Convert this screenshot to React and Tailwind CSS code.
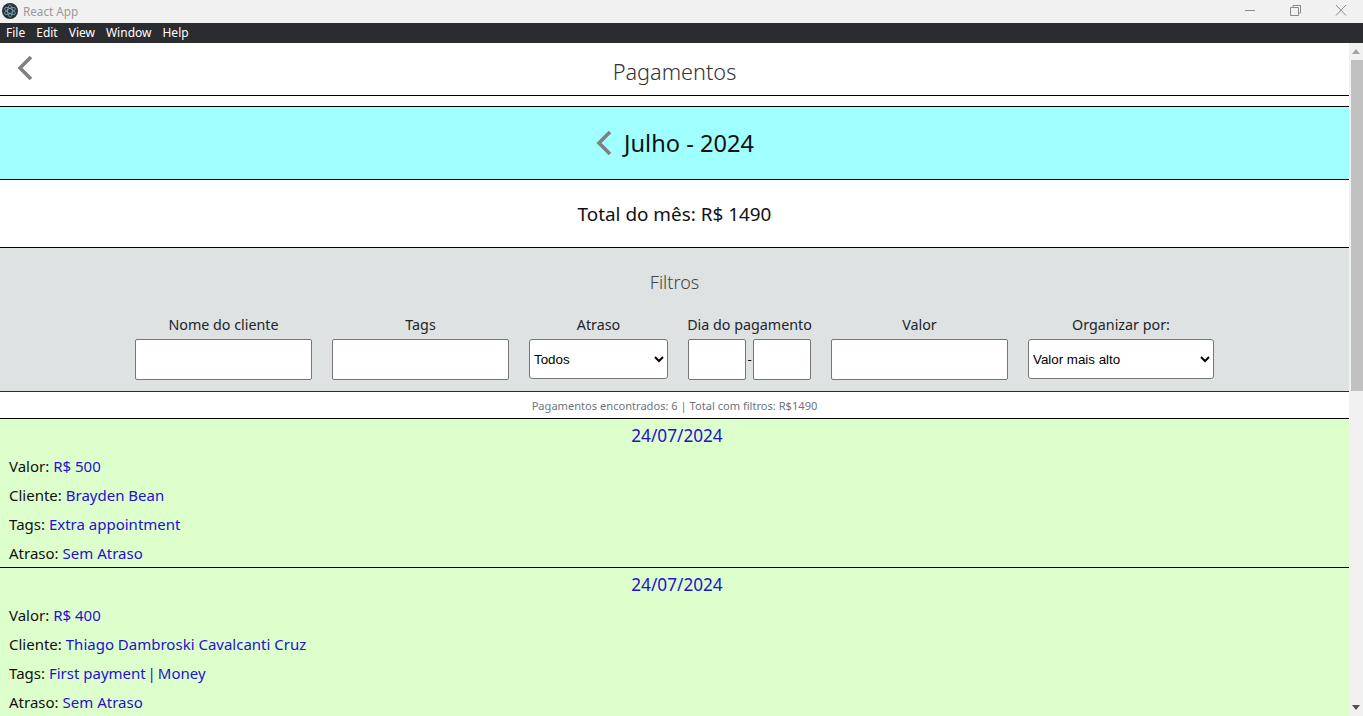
const ui = "font-['Noto_Sans',sans-serif]";

function Chevron({ className }) {
  return (
    <svg viewBox="0 0 18 26" className={className} fill="none" stroke="#808080" strokeWidth="3.6">
      <path d="M15 2 L4 13 L15 24" />
    </svg>
  );
}

function Logo() {
  return (
    <svg viewBox="0 0 16 16" className="w-4 h-4 ml-[2px] shrink-0">
      <circle cx="8" cy="8" r="8" fill="#2b2f3b" />
      <g fill="none" stroke="#9feaf9" strokeWidth="0.7" opacity="0.75">
        <ellipse cx="8" cy="8" rx="6" ry="2.4" transform="rotate(30 8 8)" />
        <ellipse cx="8" cy="8" rx="6" ry="2.4" transform="rotate(90 8 8)" />
        <ellipse cx="8" cy="8" rx="6" ry="2.4" transform="rotate(150 8 8)" />
      </g>
    </svg>
  );
}

function TitleBar() {
  return (
    <div className="h-[23px] shrink-0 bg-[#f1f1f1] flex items-center justify-between">
      <div className="flex items-center gap-[5px]">
        <Logo />
        <span className="text-[11.7px] text-[#999999]">React App</span>
      </div>
      <div className="flex items-center">
        <svg viewBox="0 0 160 23" className="w-[160px] h-[23px]" fill="none" stroke="#8a8a8a" strokeWidth="1">
          <path d="M42 10.5 H52" />
          <path d="M87.5 7.5 H95.5 V15.5 H87.5 Z" />
          <path d="M90 7 V5.5 H97.5 V13 H96" />
          <path d="M133 5 L143 15.5 M143 5 L133 15.5" />
        </svg>
      </div>
    </div>
  );
}

function MenuBar() {
  return (
    <div className="h-[20px] shrink-0 bg-[#2b2c30] flex items-center pl-[6px] gap-[11px] text-[12px] text-white">
      <span>File</span>
      <span>Edit</span>
      <span>View</span>
      <span>Window</span>
      <span>Help</span>
    </div>
  );
}

function Scrollbar() {
  return (
    <div className="w-[14px] shrink-0 bg-[#f1f1f1] flex flex-col items-end">
      <div className="h-[17px] w-full flex items-center justify-center">
        <svg viewBox="0 0 8 5" className="w-2 h-[5px]"><path d="M4 0 L8 5 H0 Z" fill="#a3a3a3" /></svg>
      </div>
      <div className="h-[331px] w-[12px] bg-[#c1c1c1]" />
      <div className="flex-1" />
      <div className="h-[17px] w-full flex items-center justify-center">
        <svg viewBox="0 0 8 5" className="w-2 h-[5px]"><path d="M0 0 H8 L4 5 Z" fill="#505050" /></svg>
      </div>
    </div>
  );
}

function Field({ label, width, children }) {
  return (
    <div className="flex flex-col items-center" style={{ width }}>
      <label className="h-[26px] text-[14.3px] leading-[24px] text-[#212529] whitespace-nowrap">{label}</label>
      {children}
    </div>
  );
}

const inputCls = "h-[41px] bg-white border border-[#767676] rounded-[2px]";
const selectCls = "h-[40px] w-full bg-white border border-[#767676] rounded-[3px] text-[13.33px] text-black pl-0 font-['Liberation_Sans',sans-serif]";

function Filters() {
  return (
    <div className="h-[144px] shrink-0 bg-[#dee2e3] border-b border-[#0b3b36]">
      <div className="text-center text-[18px] font-light leading-[27px] text-[#444444] pt-[21px]">Filtros</div>
      <div className="flex justify-center gap-[20px] mt-[17px]">
        <Field label="Nome do cliente" width={177}><input className={inputCls + " w-full"} /></Field>
        <Field label="Tags" width={177}><input className={inputCls + " w-full"} /></Field>
        <Field label="Atraso" width={139}>
          <select className={selectCls} defaultValue="Todos"><option>Todos</option></select>
        </Field>
        <Field label="Dia do pagamento" width={123}>
          <div className="flex items-center w-full">
            <input className={inputCls + " w-[58px]"} />
            <span className="w-[7px] text-center text-[13px] leading-none">-</span>
            <input className={inputCls + " w-[58px]"} />
          </div>
        </Field>
        <Field label="Valor" width={177}><input className={inputCls + " w-full"} /></Field>
        <Field label="Organizar por:" width={186}>
          <select className={selectCls} defaultValue="Valor mais alto"><option>Valor mais alto</option></select>
        </Field>
      </div>
    </div>
  );
}

function Row({ k, v }) {
  const parts = v.split(" | ");
  return (
    <div className="h-[29px] last:h-[28px] leading-[29px] text-[15px] text-[#111111] whitespace-nowrap">
      {k}:{" "}
      <span className="text-[#2410d0]">
        {parts.length > 1 ? (
          <>
            {parts[0]}
            <span className="mx-[-2px]"> | </span>
            {parts[1]}
          </>
        ) : (
          v
        )}
      </span>
    </div>
  );
}

function Card({ date, rows, last }) {
  return (
    <div className={"bg-[#ddffcc] shrink-0 " + (last ? "" : "border-b border-black")}>
      <div className="h-[33px] pl-[5px] text-center text-[17.2px] leading-[34px] text-[#2410d0]">{date}</div>
      <div className="pl-[9px]">
        {rows.map(([k, v]) => <Row key={k} k={k} v={v} />)}
      </div>
    </div>
  );
}

export default function App() {
  return (
    <div className={"h-screen w-full flex flex-col overflow-hidden bg-white " + ui}>
      <TitleBar />
      <MenuBar />
      <div className="flex-1 min-h-0 flex">
        <main className="flex-1 min-w-0 flex flex-col overflow-hidden">
          <header className="h-[53px] shrink-0 pt-[6px] border-b border-black flex items-center justify-center relative">
            <Chevron className="absolute left-[16px] top-[12px] w-[18px] h-[26px]" />
            <h1 className="text-[21.7px] font-light text-[#333333]">Pagamentos</h1>
          </header>
          <div className="h-[10px] shrink-0" />
          <section className="h-[74px] shrink-0 bg-[#a0ffff] border-y border-black flex items-center justify-center gap-[11px]">
            <Chevron className="w-[18px] h-[26px]" />
            <span className="text-[23.6px] pt-[2px] text-[#111111]">Julho - 2024</span>
          </section>
          <section className="h-[68px] shrink-0 pt-[2px] border-b border-black flex items-center justify-center text-[18.9px] text-[#111111]">
            Total do mês: R$ 1490
          </section>
          <Filters />
          <div className="h-[27px] shrink-0 pt-[2px] border-b border-black flex items-center justify-center text-[11.1px] text-[#6c757d]">
            Pagamentos encontrados: 6 | Total com filtros: R$1490
          </div>
          <Card date="24/07/2024" rows={[["Valor", "R$ 500"], ["Cliente", "Brayden Bean"], ["Tags", "Extra appointment"], ["Atraso", "Sem Atraso"]]} />
          <Card date="24/07/2024" last rows={[["Valor", "R$ 400"], ["Cliente", "Thiago Dambroski Cavalcanti Cruz"], ["Tags", "First payment | Money"], ["Atraso", "Sem Atraso"]]} />
        </main>
        <Scrollbar />
      </div>
    </div>
  );
}
